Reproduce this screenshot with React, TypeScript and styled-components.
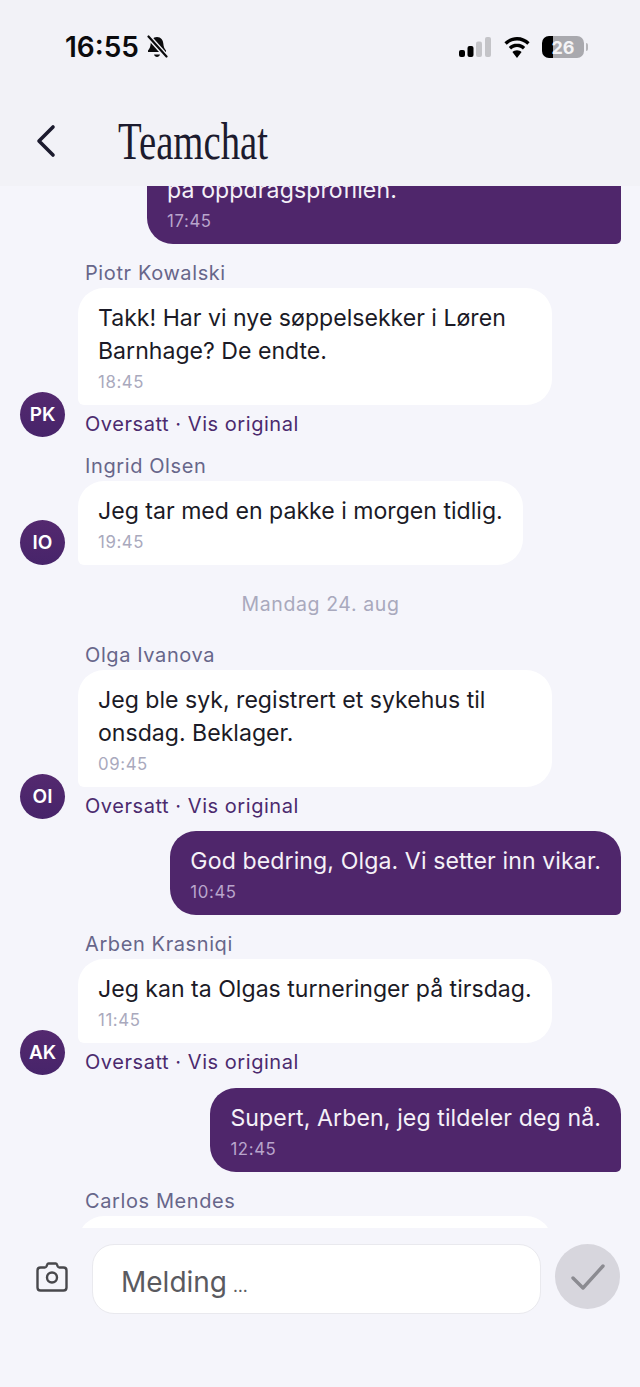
import React from 'react';
import styled, { createGlobalStyle } from 'styled-components';

type ChatItem =
  | { kind: 'own'; text: string; time: string; wide?: boolean }
  | { kind: 'other'; name: string; initials: string; text: string; time: string; translated?: boolean }
  | { kind: 'date'; label: string };

const items: ChatItem[] = [
  { kind: 'own', text: 'på oppdragsprofilen.', time: '17:45', wide: true },
  { kind: 'other', name: 'Piotr Kowalski', initials: 'PK', text: 'Takk! Har vi nye søppelsekker i Løren Barnhage? De endte.', time: '18:45', translated: true },
  { kind: 'other', name: 'Ingrid Olsen', initials: 'IO', text: 'Jeg tar med en pakke i morgen tidlig.', time: '19:45' },
  { kind: 'date', label: 'Mandag 24. aug' },
  { kind: 'other', name: 'Olga Ivanova', initials: 'OI', text: 'Jeg ble syk, registrert et sykehus til onsdag. Beklager.', time: '09:45', translated: true },
  { kind: 'own', text: 'God bedring, Olga. Vi setter inn vikar.', time: '10:45' },
  { kind: 'other', name: 'Arben Krasniqi', initials: 'AK', text: 'Jeg kan ta Olgas turneringer på tirsdag.', time: '11:45', translated: true },
  { kind: 'own', text: 'Supert, Arben, jeg tildeler deg nå.', time: '12:45' },
  { kind: 'other', name: 'Carlos Mendes', initials: 'CM', text: '', time: '' }
];

const GlobalStyle = createGlobalStyle`
  html, body {
    margin: 0;
    padding: 0;
    background: #f5f5fb;
  }

  * {
    box-sizing: border-box;
  }
`;

const Screen = styled.div`
  width: 640px;
  height: 1387px;
  display: flex;
  flex-direction: column;
  overflow: hidden;
  background: #f5f5fb;
  font-family: 'Inter', 'Liberation Sans', sans-serif;
`;

const Header = styled.header`
  flex: 0 0 186px;
  display: flex;
  flex-direction: column;
  background: #f2f2f7;
  position: relative;
  z-index: 1;
`;

const StatusBar = styled.div`
  height: 96px;
  padding: 32px 53px 0 65px;
  display: flex;
  justify-content: space-between;
  align-items: flex-start;
`;

const StatusLeft = styled.div`
  display: flex;
  align-items: center;
  gap: 7px;
  height: 30px;
  color: #0b0b0d;
`;

const Clock = styled.span`
  font-size: 28px;
  font-weight: 600;
`;

const StatusRight = styled.div`
  display: flex;
  align-items: center;
  gap: 13px;
  height: 30px;
`;

const Battery = styled.div`
  width: 42px;
  height: 22px;
  border-radius: 7px;
  background: linear-gradient(90deg, #000 0 11px, #a9a9ae 11px);
  color: #f4f4f6;
  font-size: 18px;
  font-weight: 700;
  display: flex;
  align-items: center;
  justify-content: center;
  margin: 0 3px 0 -1px;
  position: relative;

  &::after {
    content: '';
    position: absolute;
    right: -4px;
    top: 7px;
    width: 2px;
    height: 8px;
    border-radius: 0 2px 2px 0;
    background: #b5b5b9;
  }
`;

const NavBar = styled.div`
  height: 90px;
  padding: 0 0 0 36px;
  display: flex;
  align-items: flex-start;
  gap: 62px;
`;

const BackButton = styled.button`
  border: 0;
  padding: 0;
  margin-top: 28px;
  background: none;
  width: 20px;
  height: 34px;
  display: flex;
`;

const Title = styled.h1`
  margin: 18px 0 0;
  font-family: 'Liberation Serif', serif;
  font-weight: 400;
  font-size: 52px;
  line-height: 56px;
  color: #1c1b2e;
  transform: scaleX(0.745);
  transform-origin: left center;
`;

const Viewport = styled.main`
  flex: 1;
  min-height: 0;
  overflow: hidden;
`;

const List = styled.div`
  margin-top: -26px;
  padding: 0 19px 0 20px;
  display: flex;
  flex-direction: column;
  gap: 12.09px;
`;

const OwnRow = styled.div`
  display: flex;
  justify-content: flex-end;
`;

const OtherRow = styled.div`
  display: flex;
  align-items: flex-end;
  gap: 13px;
`;

const Avatar = styled.div`
  flex: 0 0 45px;
  height: 45px;
  border-radius: 50%;
  background: linear-gradient(180deg, #54296f, #47246a);
  color: #fff;
  font-size: 19px;
  font-weight: 600;
  display: flex;
  align-items: center;
  justify-content: center;
`;

const Column = styled.div`
  display: flex;
  flex-direction: column;
  align-items: flex-start;
  min-width: 0;
`;

const Name = styled.div`
  padding: 5px 0 0 7px;
  margin-bottom: 3px;
  font-size: 20px;
  line-height: 24px;
  letter-spacing: 0.6px;
  color: #67668a;
`;

const Bubble = styled.div<{ $own?: boolean; $wide?: boolean; $stub?: boolean }>`
  max-width: 474px;
  width: ${(p) => (p.$wide ? '474px' : 'auto')};
  min-height: ${(p) => (p.$stub ? '84px' : 'auto')};
  min-width: ${(p) => (p.$stub ? '474px' : '0')};
  padding: 14px 20px 10px;
  background: ${(p) => (p.$own ? '#4f266b' : '#fff')};
  color: ${(p) => (p.$own ? '#f5f1f8' : '#1b1a26')};
  border-radius: ${(p) => (p.$own ? '26px 26px 5px 26px' : '26px 26px 26px 6px')};
`;

const MessageText = styled.div<{ $own?: boolean }>`
  font-size: 23.1px;
  line-height: 33px;
  letter-spacing: ${(p) => (p.$own ? '0.1px' : '0')};
`;

const Time = styled.div<{ $own?: boolean }>`
  margin-top: 2px;
  font-size: 16.800px;
  line-height: 25px;
  letter-spacing: 0.6px;
  color: ${(p) => (p.$own ? '#b9a5cc' : '#a9a9bd')};
`;

const TranslationNote = styled.div`
  margin-top: 7px;
  padding-left: 7px;
  font-size: 20px;
  line-height: 25px;
  letter-spacing: 0.55px;
  color: #4b2a6e;
`;

const DateLabel = styled.div`
  padding: 15px 0 10px;
  text-align: center;
  font-size: 19.500px;
  line-height: 24px;
  letter-spacing: 0.6px;
  color: #a9a9bd;
`;

const Composer = styled.footer`
  flex: 0 0 159px;
  padding: 16px 19px 0 36px;
  display: flex;
  align-items: flex-start;
  background: #f5f5fb;
  position: relative;
`;

const CameraButton = styled.button`
  border: 0;
  padding: 0;
  margin: 18px 24px 0 0;
  background: none;
  width: 32px;
  height: 32px;
`;

const Field = styled.div`
  flex: 0 0 449px;
  height: 70px;
  padding: 5px 0 0 28px;
  display: flex;
  align-items: center;
  gap: 6px;
  background: #fff;
  border: 1.5px solid #e9e9ee;
  border-radius: 22px;
  font-size: 28px;
  color: #5a5a60;
`;

const Ellipsis = styled.span`
  font-size: 17px;
  padding-top: 9px;
`;

const SendButton = styled.button`
  flex: 0 0 65px;
  height: 65px;
  margin-left: 14px;
  border: 0;
  padding: 0;
  border-radius: 50%;
  background: #d7d6dd;
  display: flex;
  align-items: center;
  justify-content: center;
`;

function Message ({ item }: { item: ChatItem }) {
  if (item.kind === 'date') {
    return <DateLabel>{item.label}</DateLabel>;
  }

  if (item.kind === 'own') {
    return (
      <OwnRow>
        <Bubble $own $wide={item.wide}>
          <MessageText $own>{item.text}</MessageText>
          <Time $own>{item.time}</Time>
        </Bubble>
      </OwnRow>
    );
  }

  return (
    <OtherRow>
      <Avatar>{item.initials}</Avatar>
      <Column>
        <Name>{item.name}</Name>
        <Bubble $stub={!item.text}>
          <MessageText>{item.text}</MessageText>
          <Time>{item.time}</Time>
        </Bubble>
        {item.translated && <TranslationNote>Oversatt · Vis original</TranslationNote>}
      </Column>
    </OtherRow>
  );
}

export default function App () {
  return (
    <Screen>
      <GlobalStyle />
      <Header>
        <StatusBar>
          <StatusLeft>
            <Clock>16:55</Clock>
            <svg width='22' height='24' viewBox='0 0 22 24' fill='none'>
              <path d='M11 2c-4 0-6 3-6.300 6.500-.2 3-1 5-2.700 7v1.500h18v-1.500c-1.700-2-2.500-4-2.700-7C17 5 15 2 11 2z' fill='#0b0b0d' />
              <path d='M8 19.500c.4 1.600 1.600 2.500 3 2.500s2.600-.9 3-2.500z' fill='#0b0b0d' />
              <path d='M2.500 1.500l18 20' stroke='#f2f2f7' strokeWidth='5' />
              <path d='M2.500 1.500l18 20' stroke='#0b0b0d' strokeWidth='2.200' strokeLinecap='round' />
            </svg>
          </StatusLeft>
          <StatusRight>
            <svg width='32' height='20' viewBox='0 0 32 20'>
              <rect x='0' y='13' width='6' height='7' rx='2' fill='#000' />
              <rect x='8.500' y='9' width='6' height='11' rx='2' fill='#000' />
              <rect x='17' y='4.500' width='6' height='15.500' rx='2' fill='#c4c4c8' />
              <rect x='26' y='0' width='6' height='20' rx='2' fill='#c4c4c8' />
            </svg>
            <svg width='26' height='21' viewBox='0 0 26 21'>
              <path d='M13 0C8 0 3.600 2 .4 5.200l2.300 2.500C5.400 5 9 3.400 13 3.400S20.600 5 23.300 7.700l2.300-2.500C22.400 2 18 0 13 0z' fill='#000' />
              <path d='M13 6.600c-3.200 0-6.100 1.300-8.200 3.400l2.300 2.500c1.500-1.500 3.600-2.400 5.900-2.400s4.400.9 5.900 2.400l2.300-2.500c-2.100-2.100-5-3.400-8.200-3.400z' fill='#000' />
              <path d='M13 13.200c-1.800 0-3.400.7-4.600 1.900L13 21l4.600-5.900c-1.200-1.200-2.800-1.900-4.600-1.900z' fill='#000' />
            </svg>
            <Battery>26</Battery>
          </StatusRight>
        </StatusBar>
        <NavBar>
          <BackButton aria-label='Tilbake'>
            <svg width='20' height='34' viewBox='0 0 20 34' fill='none'>
              <path d='M17 3L3 17l14 14' stroke='#1c1b2e' strokeWidth='3.600' strokeLinecap='round' strokeLinejoin='round' />
            </svg>
          </BackButton>
          <Title>Teamchat</Title>
        </NavBar>
      </Header>
      <Viewport>
        <List>
          {items.map((item, i) => <Message item={item} key={i} />)}
        </List>
      </Viewport>
      <Composer>
        <CameraButton aria-label='Kamera'>
          <svg width='32' height='30' viewBox='0 0 32 30' fill='none'>
            <path d='M4.500 5.500h4.300c.8 0 1.400-.4 1.700-1.100l.8-2c.2-.6.7-.9 1.300-.9h7c.6 0 1.100.3 1.300.9l.8 2c.3.700.9 1.100 1.700 1.100h4.100c1.700 0 3 1.300 3 3v17c0 1.700-1.300 3-3 3h-23c-1.700 0-3-1.300-3-3v-17c0-1.700 1.300-3 3-3z' stroke='#48484c' strokeWidth='2.400' strokeLinejoin='round' />
            <circle cx='16' cy='15.500' r='5' stroke='#48484c' strokeWidth='2.400' />
          </svg>
        </CameraButton>
        <Field>Melding <Ellipsis>…</Ellipsis></Field>
        <SendButton aria-label='Send'>
          <svg width='34' height='28' viewBox='0 0 34 28' fill='none'>
            <path d='M2 15l10 10L32 3' stroke='#8b8b91' strokeWidth='3.400' strokeLinecap='round' strokeLinejoin='round' />
          </svg>
        </SendButton>
      </Composer>
    </Screen>
  );
}
